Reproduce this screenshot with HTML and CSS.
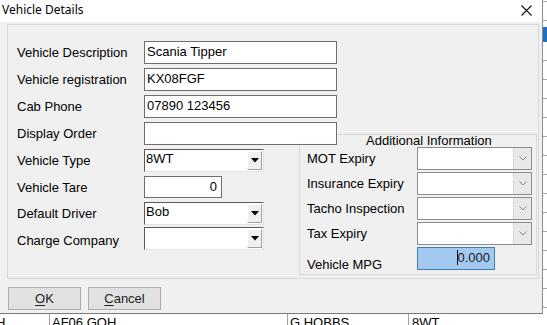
FILE: index.html
```html
<!DOCTYPE html>
<html>
<head>
<meta charset="utf-8">
<link rel="stylesheet" href="styles.css">
</head>
<body>
<div class="dialog">
  <div class="titlebar">
    <span class="title">Vehicle Details</span>
    <svg class="close" width="11" height="11" viewBox="0 0 11 11"><path d="M0.5 0.5 L10.5 10.5 M10.5 0.5 L0.5 10.5" stroke="#111" stroke-width="1.1" fill="none"/></svg>
  </div>
  <div class="body">
    <div class="panel">
      <div class="form">
        <label class="lbl">Vehicle Description</label>
        <div class="tb wide">Scania Tipper</div>
        <label class="lbl">Vehicle registration</label>
        <div class="tb wide">KX08FGF</div>
        <label class="lbl">Cab Phone</label>
        <div class="tb wide">07890 123456</div>
        <label class="lbl">Display Order</label>
        <div class="tb wide"></div>
        <label class="lbl">Vehicle Type</label>
        <div class="combo"><span class="ctext">8WT</span><span class="cbtn"><svg width="8" height="5" viewBox="0 0 8 5"><path d="M0 0 H8 L4 4.5 Z" fill="#000"/></svg></span></div>
        <label class="lbl">Vehicle Tare</label>
        <div class="tb tare">0</div>
        <label class="lbl">Default Driver</label>
        <div class="combo"><span class="ctext">Bob</span><span class="cbtn"><svg width="8" height="5" viewBox="0 0 8 5"><path d="M0 0 H8 L4 4.5 Z" fill="#000"/></svg></span></div>
        <label class="lbl">Charge Company</label>
        <div class="combo up"><span class="ctext"></span><span class="cbtn"><svg width="8" height="5" viewBox="0 0 8 5"><path d="M0 0 H8 L4 4.5 Z" fill="#000"/></svg></span></div>
      </div>
      <div class="group">
        <div class="legend">Additional Information</div>
        <div class="gform">
          <label class="lbl">MOT Expiry</label>
          <div class="dp"><span class="dpbtn"><svg width="8" height="5" viewBox="0 0 8 5"><path d="M0.5 0.5 L4 4 L7.5 0.5" stroke="#8a8a8a" stroke-width="1" fill="none"/></svg></span></div>
          <label class="lbl">Insurance Expiry</label>
          <div class="dp"><span class="dpbtn"><svg width="8" height="5" viewBox="0 0 8 5"><path d="M0.5 0.5 L4 4 L7.5 0.5" stroke="#8a8a8a" stroke-width="1" fill="none"/></svg></span></div>
          <label class="lbl">Tacho Inspection</label>
          <div class="dp"><span class="dpbtn"><svg width="8" height="5" viewBox="0 0 8 5"><path d="M0.5 0.5 L4 4 L7.5 0.5" stroke="#8a8a8a" stroke-width="1" fill="none"/></svg></span></div>
          <label class="lbl">Tax Expiry</label>
          <div class="dp"><span class="dpbtn"><svg width="8" height="5" viewBox="0 0 8 5"><path d="M0.5 0.5 L4 4 L7.5 0.5" stroke="#8a8a8a" stroke-width="1" fill="none"/></svg></span></div>
          <label class="lbl low">Vehicle MPG</label>
          <div class="mpg"><span class="caret"></span>0.000</div>
        </div>
      </div>
    </div>
    <div class="buttons">
      <div class="btn"><u>O</u>K</div>
      <div class="btn"><u>C</u>ancel</div>
    </div>
  </div>
</div>
<div class="strip"><div class="sel"></div></div>
<div class="approw">
  <div class="cell c1"><span class="clip">H</span></div>
  <div class="cell c2">AF06 GOH</div>
  <div class="cell c3">G HOBBS</div>
  <div class="cell c4">8WT</div>
</div>
</body>
</html>
```

FILE: styles.css
```css
html, body {
  margin: 0;
  padding: 0;
}
body {
  width: 547px;
  height: 325px;
  overflow: hidden;
  background: #ffffff;
  display: grid;
  grid-template-columns: 543px 4px;
  grid-template-rows: 314px 11px;
  font-family: "Liberation Sans", Arial, sans-serif;
  font-size: 13px;
  color: #000;
}
.dialog {
  grid-column: 1;
  grid-row: 1;
  box-sizing: border-box;
  border-right: 1px solid #8c8c8c;
  border-bottom: 1px solid #7a7a7a;
  background: #f0f0f0;
  display: flex;
  flex-direction: column;
}
.titlebar {
  height: 22px;
  background: #ffffff;
  display: flex;
  align-items: center;
  justify-content: space-between;
  padding-left: 2px;
  padding-right: 10px;
}
.title {
  font-family: "Noto Sans", "Open Sans", sans-serif;
  font-size: 12px;
  line-height: 16px;
  margin-top: -2px;
}
.close {
  display: block;
  margin-top: -1px;
}
.body {
  flex: 1;
  display: flex;
  flex-direction: column;
}
.panel {
  margin: 2px 0 0 7px;
  width: 532px;
  height: 255px;
  box-sizing: border-box;
  border: 1px solid #d9d9d9;
  display: grid;
}
.panel > .form, .panel > .group {
  grid-area: 1 / 1;
}
.form {
  padding: 16px 0 0 9px;
  display: grid;
  grid-template-columns: 127px auto;
  grid-template-rows: 23px 23px 23px 23px 23px 22px 23px 23px;
  row-gap: 4px;
  align-content: start;
  justify-content: start;
  align-items: center;
  justify-items: start;
  z-index: 2;
}
.lbl {
  line-height: 15px;
  white-space: nowrap;
}
.up {
  margin-top: -4px;
}
.tb {
  box-sizing: border-box;
  height: 23px;
  background: #fff;
  border: 1px solid #6e6e6e;
  padding: 0 2px;
  line-height: 19px;
}
.tb.wide { width: 193px; height: 23px; }
.tb.tare { width: 78px; height: 22px; text-align: right; padding-right: 4px; line-height: 19px; }
.combo {
  box-sizing: border-box;
  width: 120px;
  height: 23px;
  background: #fff;
  border: 1px solid;
  border-color: #5a5a5a #e3e3e3 #e3e3e3 #5a5a5a;
  display: flex;
  align-items: stretch;
}
.ctext {
  flex: 1;
  padding-left: 1px;
  line-height: 18px;
}
.cbtn {
  width: 15px;
  margin: 1px 1px 1px 0;
  background: #f0f0f0;
  border: 1px solid;
  border-color: #fff #a0a0a0 #a0a0a0 #fff;
  box-sizing: border-box;
  display: flex;
  align-items: center;
  justify-content: center;
}
.cbtn svg { display: block; }
.group {
  margin: 109px 0 0 291px;
  width: 238px;
  height: 141px;
  box-sizing: border-box;
  border: 1px solid #d9d9d9;
  align-self: start;
  justify-self: start;
  z-index: 1;
}
.legend {
  height: 12px;
  line-height: 12px;
  padding-left: 66px;
  white-space: nowrap;
}
.gform {
  padding-left: 7px;
  display: grid;
  grid-template-columns: 110px 115px;
  grid-auto-rows: 23px;
  row-gap: 2px;
  align-items: center;
}
.lbl.low {
  align-self: end;
  line-height: 15px;
  margin-bottom: -2px;
}
.dp {
  box-sizing: border-box;
  height: 23px;
  background: #fff;
  border: 1px solid #8c8c8c;
  display: flex;
  justify-content: flex-end;
}
.dpbtn {
  width: 17px;
  background: #e8e8e8;
  border-left: 1px solid #d8d8d8;
  display: flex;
  align-items: center;
  justify-content: center;
}
.dpbtn svg { display: block; }
.mpg {
  box-sizing: border-box;
  width: 78px;
  height: 23px;
  background: #a4c9f0;
  border: 1px solid #3e7fad;
  text-align: right;
  padding-right: 4px;
  line-height: 20px;
  color: #1a1a1a;
}
.caret {
  display: inline-block;
  width: 1px;
  height: 15px;
  background: #000;
  vertical-align: -3px;
  margin-right: -1px;
}
.buttons {
  margin-top: 8px;
  padding-left: 8px;
  display: flex;
  gap: 7px;
}
.btn {
  box-sizing: border-box;
  width: 73px;
  height: 23px;
  background: #e1e1e1;
  border: 1px solid #adadad;
  text-align: center;
  line-height: 21px;
  color: #222;
}
.btn u { text-decoration-thickness: 1px; text-underline-offset: 2px; }
.strip {
  grid-column: 2;
  grid-row: 1 / span 2;
  background: repeating-linear-gradient(to bottom, #ffffff 0, #ffffff 18px, #a8a8a8 18px, #a8a8a8 19px);
  background-position: 0 42px;
  background-color: #fff;
}
.sel {
  margin-top: 27px;
  height: 15px;
  background: #1e6fc0;
}
.approw {
  grid-column: 1;
  grid-row: 2;
  display: flex;
  background: #fff;
  overflow: hidden;
  line-height: 15px;
}
.cell {
  box-sizing: border-box;
  border-right: 1px solid #a0a0a0;
  padding-left: 2px;
  padding-top: 1px;
  white-space: nowrap;
  overflow: hidden;
}
.c1 { width: 50px; padding-left: 0; }
.clip { margin-left: -4px; }
.c2 { width: 238px; }
.c3 { width: 121px; }
.c4 { flex: 1; border-right: none; padding-left: 3px; }
```
